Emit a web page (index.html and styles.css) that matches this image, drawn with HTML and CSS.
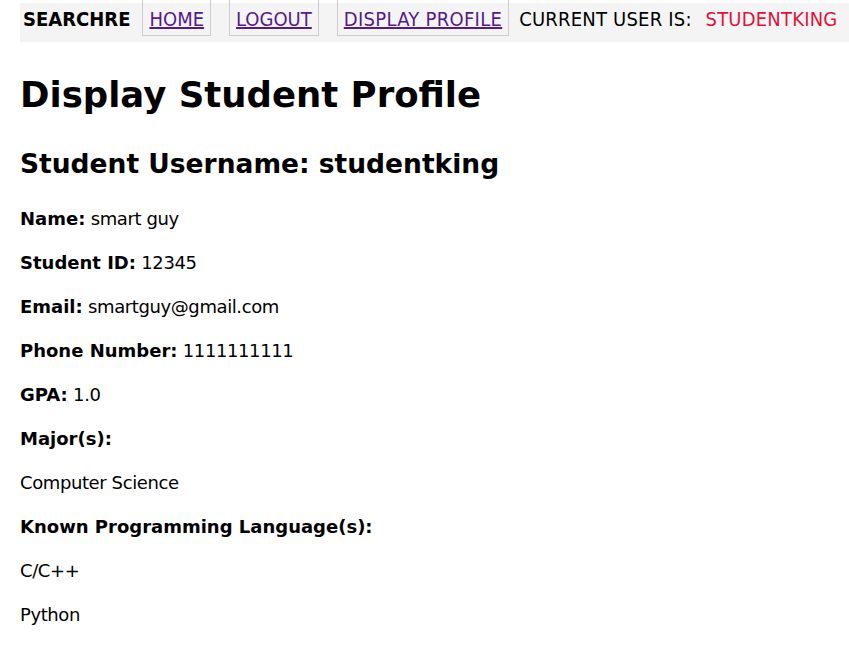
FILE: index.html
```html
<!DOCTYPE html>
<html>
<head>
<meta charset="utf-8">
<title>Display Student Profile</title>
<link rel="stylesheet" href="styles.css">
</head>
<body>
<nav class="topnav">
  <span class="brand">SEARCHRE</span>
  <a class="navlink" href="#">HOME</a>
  <a class="navlink" href="#">LOGOUT</a>
  <a class="navlink navlink-wide" href="#">DISPLAY PROFILE</a>
  <span class="current">CURRENT USER IS: <span class="user">STUDENTKING</span></span>
</nav>
<main class="content">
  <h1 class="title">Display Student Profile</h1>
  <h2 class="subtitle">Student Username: studentking</h2>
  <p class="row first"><b class="label">Name:</b> smart guy</p>
  <p class="row"><b class="label">Student ID:</b> 12345</p>
  <p class="row"><b class="label">Email:</b> smartguy@gmail.com</p>
  <p class="row"><b class="label">Phone Number:</b> 1111111111</p>
  <p class="row"><b class="label">GPA:</b> 1.0</p>
  <p class="row"><b class="label">Major(s):</b></p>
  <p class="row">Computer Science</p>
  <p class="row"><b class="label">Known Programming Language(s):</b></p>
  <p class="row">C/C++</p>
  <p class="row">Python</p>
</main>
</body>
</html>
```
FILE: styles.css
```css
html, body {
  background: #fff;
}
body {
  margin: 0 0 0 20px;
  font-family: "DejaVu Sans", sans-serif;
  font-size: 18px;
  color: #000;
}
.topnav {
  margin-top: 3px;
  height: 39px;
  background: #f4f4f4;
  display: flex;
  align-items: flex-start;
  white-space: nowrap;
  font-family: "DejaVu Sans Condensed", "DejaVu Sans", sans-serif;
  font-size: 20px;
  line-height: 23px;
}
.brand {
  font-weight: bold;
  padding: 5px 0 0 3px;
  margin-right: 12px;
}
.navlink {
  color: #551a8b;
  text-decoration: underline;
  border: 1px solid #cccccc;
  border-top: none;
  margin-top: -3px;
  padding: 8px 6px 4px;
  margin-right: 18px;
}
.navlink-wide {
  letter-spacing: 0.3px;
  margin-right: 10px;
}
.current {
  padding-top: 5px;
  letter-spacing: 0.2px;
}
.user {
  color: #dc143c;
  margin-left: 8px;
}
.title {
  font-size: 35.5px;
  line-height: 42px;
  margin: 32px 0 0;
}
.subtitle {
  font-size: 26.5px;
  line-height: 31px;
  margin: 32px 0 0;
}
.row {
  margin: 20px 0 0;
  line-height: 24px;
  letter-spacing: -0.4px;
}
.row.first {
  margin-top: 28px;
}
.label {
  letter-spacing: 0;
}
```
